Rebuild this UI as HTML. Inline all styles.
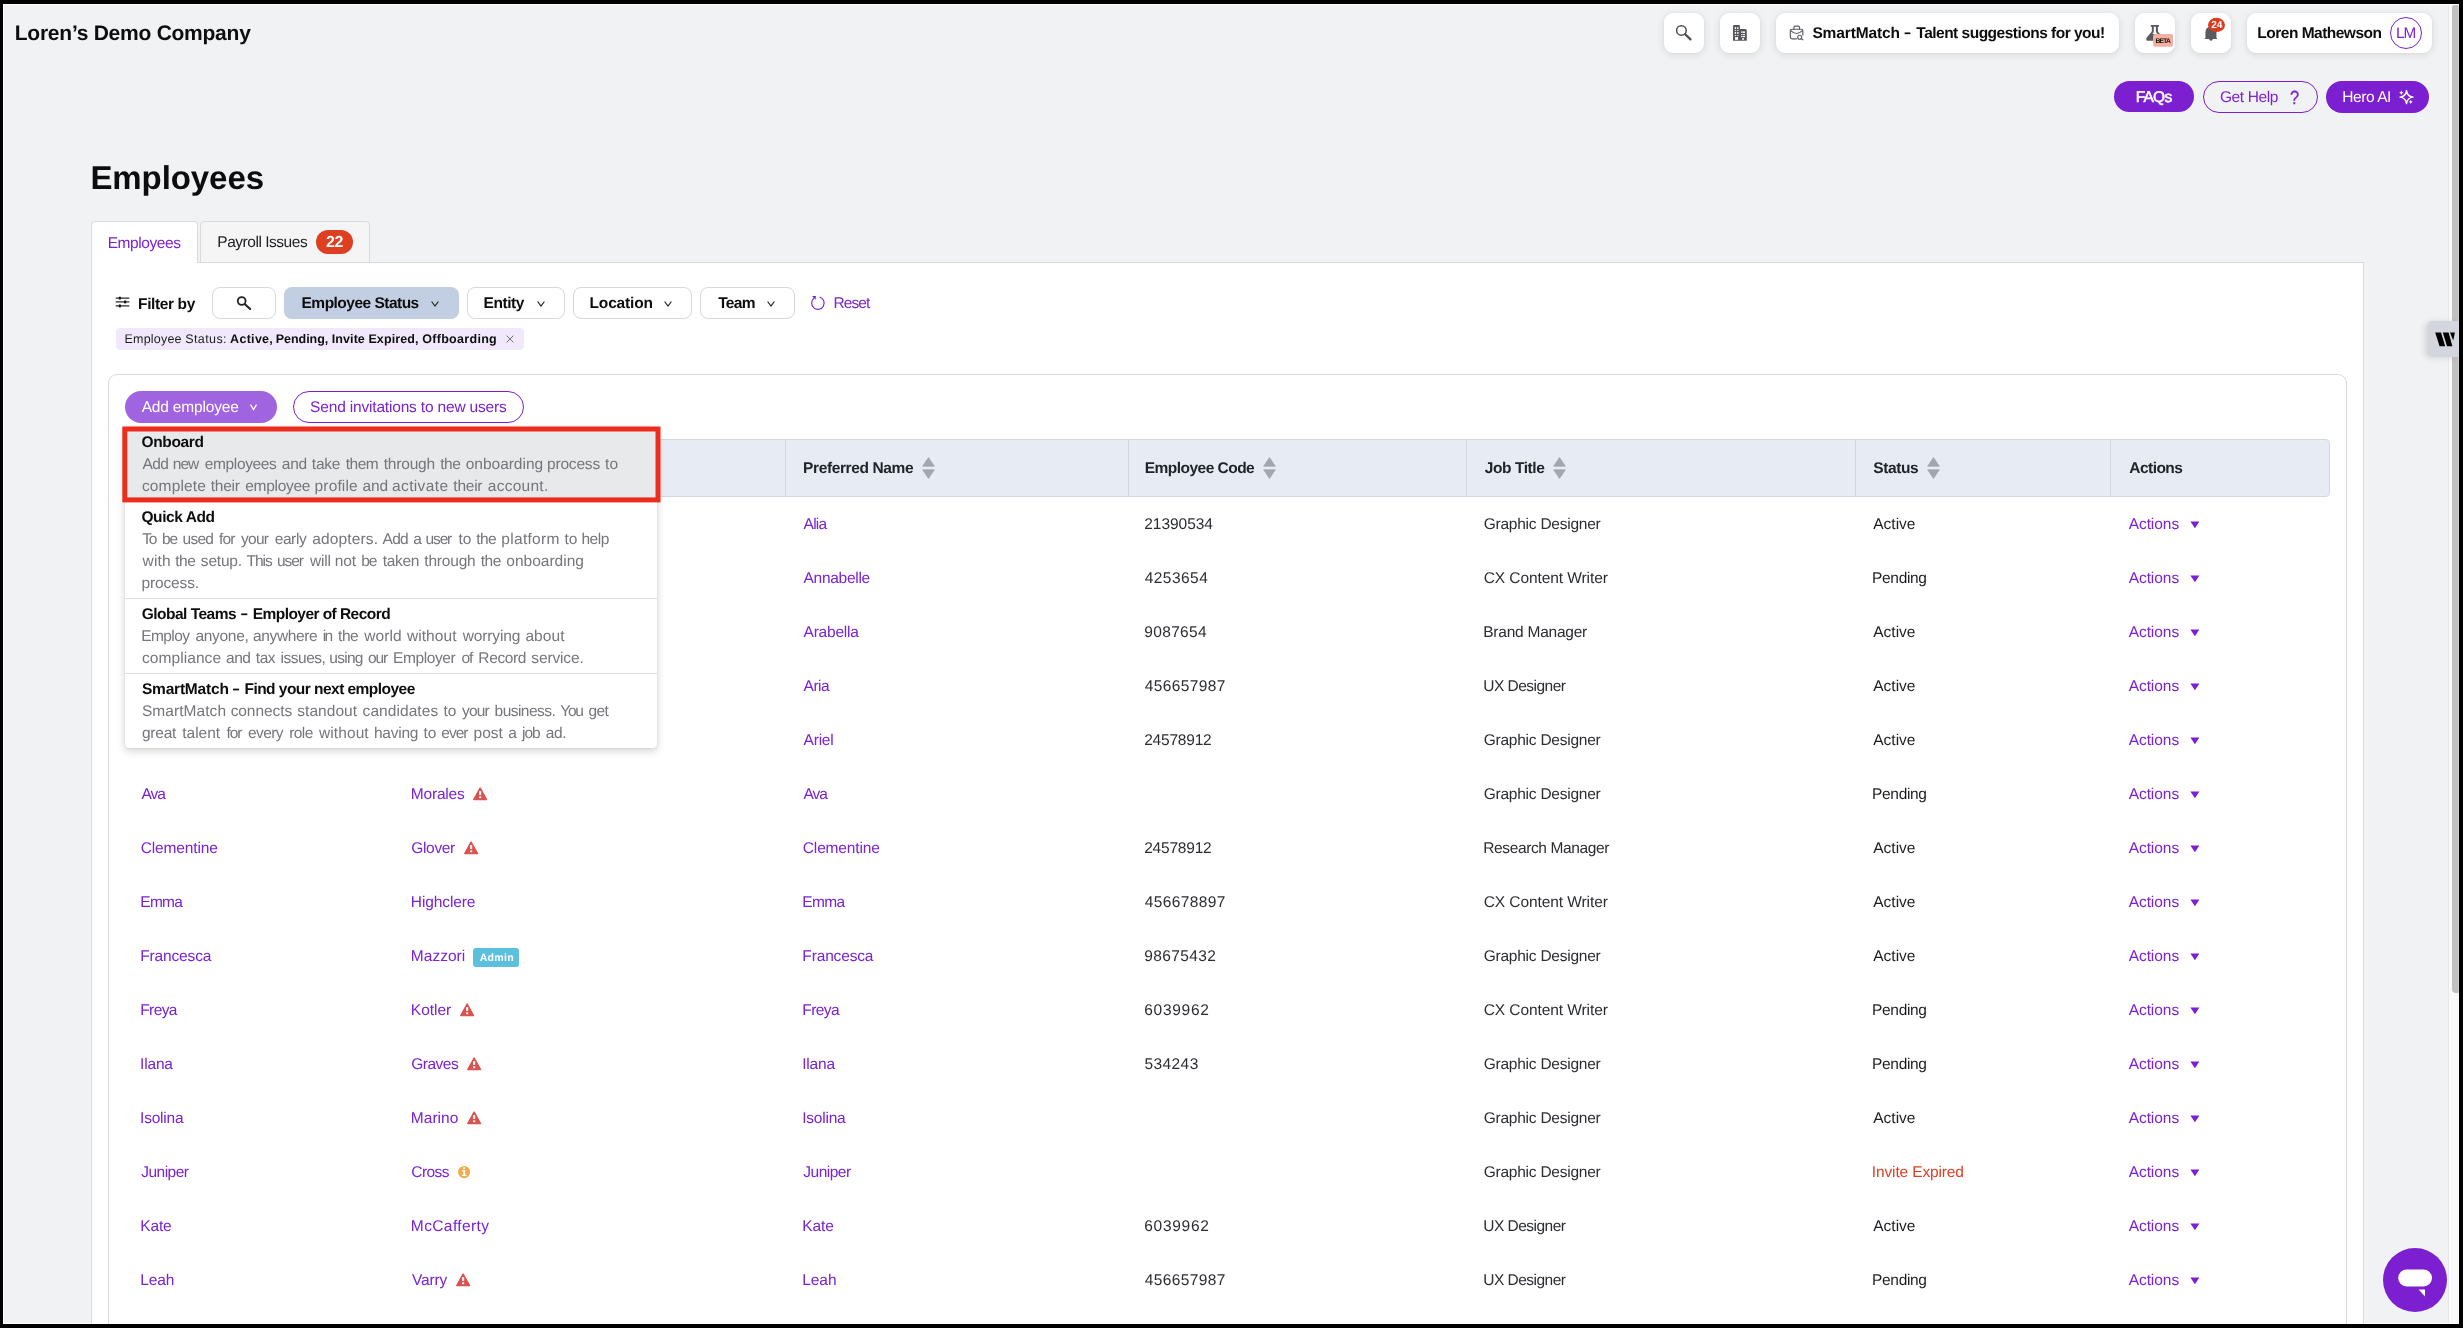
<!DOCTYPE html>
<html><head><meta charset="utf-8"><title>Employees</title>
<style>
html,body{margin:0;padding:0;}
body{width:2463px;height:1328px;background:#000;font-family:"Liberation Sans",sans-serif;position:relative;}
.b{position:absolute;box-sizing:border-box;}
.t{position:absolute;white-space:nowrap;font-family:"Liberation Sans",sans-serif;text-rendering:geometricPrecision;}
svg{display:block;overflow:visible;}
#page{position:absolute;left:0;top:0;width:2463px;height:1328px;overflow:hidden;will-change:transform;}
</style></head><body><div id="page">
<div class="b" style="left:3px;top:4px;width:2456px;height:1320px;background:#fff;"></div>
<div class="b" style="left:4px;top:5px;width:2455px;height:1318px;background:#f1f2f4;"></div>
<div class="t" style="left:14.80px;top:21px;font-size:21px;line-height:26px;font-weight:700;color:#0d0d0f;letter-spacing:-0.250px;">Loren’s Demo Company</div>
<div class="b" style="left:1664px;top:13px;width:40px;height:40px;background:#fff;border-radius:9px;box-shadow:0 2px 8px rgba(0,0,0,.10),0 0 3px rgba(0,0,0,.05);"></div>
<div class="b" style="left:1720px;top:13px;width:40px;height:40px;background:#fff;border-radius:9px;box-shadow:0 2px 8px rgba(0,0,0,.10),0 0 3px rgba(0,0,0,.05);"></div>
<div class="b" style="left:1776px;top:13px;width:343px;height:40px;background:#fff;border-radius:9px;box-shadow:0 2px 8px rgba(0,0,0,.10),0 0 3px rgba(0,0,0,.05);"></div>
<div class="b" style="left:2135px;top:13px;width:40px;height:40px;background:#fff;border-radius:9px;box-shadow:0 2px 8px rgba(0,0,0,.10),0 0 3px rgba(0,0,0,.05);"></div>
<div class="b" style="left:2191px;top:13px;width:40px;height:40px;background:#fff;border-radius:9px;box-shadow:0 2px 8px rgba(0,0,0,.10),0 0 3px rgba(0,0,0,.05);"></div>
<div class="b" style="left:2247px;top:13px;width:185px;height:40px;background:#fff;border-radius:9px;box-shadow:0 2px 8px rgba(0,0,0,.10),0 0 3px rgba(0,0,0,.05);"></div>
<svg class="b" style="left:1664px;top:13px;" width="40" height="40" viewBox="0 0 40 40"><circle cx="17.4" cy="17.45" r="4.8" fill="none" stroke="#4d4e54" stroke-width="1.5"/><path d="M21.2 21.2 L26.5 26.4" stroke="#4d4e54" stroke-width="2.3" stroke-linecap="round"/></svg>
<svg class="b" style="left:1720px;top:13px;" width="40" height="40" viewBox="0 0 40 40"><path d="M13 27.85 V13.4 a1.3 1.3 0 0 1 1.3 -1.3 H18.7 a1.3 1.3 0 0 1 1.3 1.3 V16.1 H25.2 a1.6 1.6 0 0 1 1.6 1.6 V27.85 Z" fill="#55565c"/>
<g fill="#fff"><rect x="14.75" y="14.15" width="1.35" height="1.85"/><rect x="17.2" y="14.15" width="1.35" height="1.85"/><rect x="14.75" y="17" width="1.35" height="0.9"/><rect x="17.2" y="17" width="1.35" height="0.9"/><rect x="14.75" y="19" width="1.35" height="1.8"/><rect x="17.2" y="19" width="1.35" height="1.8"/><rect x="14.75" y="22.1" width="1.35" height="0.9"/><rect x="17.2" y="22.1" width="1.35" height="0.9"/><rect x="15.05" y="24.1" width="3" height="2.7"/>
<rect x="21.1" y="18.4" width="3.9" height="1.5"/><rect x="21.1" y="21.1" width="3.9" height="1"/><rect x="21.1" y="23" width="3.9" height="1.1"/><rect x="22.1" y="25.15" width="1.8" height="1.65"/></g>
<g fill="#55565c"><rect x="21.9" y="18.4" width="0.5" height="6"/></g></svg>
<svg class="b" style="left:1788px;top:24px;" width="18" height="18" viewBox="0 0 18 18"><g fill="none" stroke="#5b5c62" stroke-width="1.15" stroke-linecap="round" stroke-linejoin="round"><path d="M6 5.2 V3.3 a1.2 1.2 0 0 1 1.2 -1.2 H10.3 a1.2 1.2 0 0 1 1.2 1.2 V5.2"/><path d="M14.8 10.9 V6.9 a1.7 1.7 0 0 0 -1.7 -1.7 H4 a1.7 1.7 0 0 0 -1.7 1.7 V13 a1.8 1.8 0 0 0 1.8 1.8 H8.5"/><path d="M2.7 6.7 Q8.5 12.3 14.4 6.7"/><circle cx="11.7" cy="13.2" r="2"/><path d="M13.2 14.6 L14.8 15.8"/></g></svg>
<div class="t" style="left:1812.40px;top:24px;font-size:15.5px;line-height:20px;font-weight:700;color:#0d0d0f;letter-spacing:-0.118px;">SmartMatch</div>
<svg class="b" style="left:0px;top:0px;" width="2463" height="1328" viewBox="0 0 2463 1328"><rect x="1904.6" y="32.45" width="5.80" height="1.7" fill="#0d0d0f"/></svg>
<div class="t" style="left:1916.33px;top:24px;font-size:15.5px;line-height:20px;font-weight:700;color:#0d0d0f;letter-spacing:-0.509px;">Talent suggestions for you!</div>
<svg class="b" style="left:2135px;top:13px;" width="40" height="40" viewBox="0 0 40 40"><path d="M15.8 12.05 H23.95 V13.7 H22.9 V18.1 Q22.9 19 23.6 19.6 L28.6 24.6 Q29.6 25.8 28.9 27 Q28.4 27.85 27.2 27.85 H13.2 Q11.9 27.85 11.4 26.9 Q10.9 25.8 11.7 24.6 L16.4 18.9 Q16.9 18.3 16.9 17.6 V13.7 H15.8 Z M18.8 13.7 V18 Q18.8 19.2 18 20.2 L17.3 21.1 H22.6 L21.6 19.9 Q20.9 19 20.9 18 V13.7 Z" fill="#595a60" fill-rule="evenodd"/>
<rect x="18.1" y="21.1" width="19.9" height="12.6" rx="1.8" fill="#f2b0a1"/></svg>
<div class="t" style="left:2155.55px;top:37px;font-size:6.7px;line-height:10px;font-weight:700;color:#1a0d0a;letter-spacing:-0.798px;">BETA</div>
<svg class="b" style="left:2191px;top:13px;" width="40" height="40" viewBox="0 0 40 40"><path d="M19.95 13.4 a5.5 5.5 0 0 1 5.5 5.5 V24.9 h0.45 v1 H13.85 v-1 h0.6 V18.9 a5.5 5.5 0 0 1 5.5 -5.5z M17.8 25.9 h4.2 l-1.3 1.7 q-0.8 0.5 -1.6 0z" fill="#5a5b61"/>
<ellipse cx="25.5" cy="11.9" rx="8.5" ry="7.1" fill="#de3b1e"/></svg>
<div class="t" style="left:2211.15px;top:20px;font-size:10px;line-height:12px;font-weight:700;color:#fff;letter-spacing:0.075px;">24</div>
<div class="t" style="left:2257.36px;top:24px;font-size:15.5px;line-height:20px;font-weight:700;color:#0d0d0f;letter-spacing:-0.512px;">Loren Mathewson</div>
<div class="b" style="left:2390px;top:17px;width:32px;height:32px;border:1px solid #7a22d4;border-radius:50%;"></div>
<div class="t" style="left:2395.94px;top:24px;font-size:15.3px;line-height:20px;color:#7a22d4;letter-spacing:-0.840px;">LM</div>
<div class="b" style="left:2114px;top:81px;width:80px;height:31px;background:#7b1fd1;border-radius:16px;"></div>
<div class="t" style="left:2135.73px;top:88px;font-size:15.5px;line-height:20px;color:#fff;letter-spacing:-0.778px;-webkit-text-stroke:0.55px #fff;">FAQs</div>
<div class="b" style="left:2203px;top:81px;width:115px;height:32px;border:1px solid #7b1fd1;border-radius:16px;"></div>
<div class="t" style="left:2219.92px;top:88px;font-size:15.5px;line-height:20px;color:#7a22d4;letter-spacing:-0.392px;">Get Help</div>
<div class="t" style="left:2290.02px;top:87px;font-size:19px;line-height:24px;color:#7a22d4;-webkit-text-stroke:0.3px #7a22d4;transform:scaleX(.86);transform-origin:0 0;">?</div>
<div class="b" style="left:2326px;top:81px;width:103px;height:32px;background:#7b1fd1;border-radius:16px;"></div>
<div class="t" style="left:2342.33px;top:88px;font-size:15.5px;line-height:20px;color:#fff;letter-spacing:-0.434px;">Hero AI</div>
<svg class="b" style="left:2398px;top:89px;" width="16" height="16" viewBox="0 0 16 16"><path d="M8.5 1.6 Q9.2 7.4 15 8.1 Q9.2 8.8 8.5 14.6 Q7.8 8.8 2 8.1 Q7.8 7.4 8.5 1.6 Z" fill="none" stroke="#fff" stroke-width="1.45" stroke-linejoin="round"/><g fill="#fff"><path d="M3.3 1.5 L4 3 L5.5 3.7 L4 4.4 L3.3 5.9 L2.6 4.4 L1.1 3.7 L2.6 3 Z"/><path d="M12.7 10.7 L13.4 12.2 L14.9 12.9 L13.4 13.6 L12.7 15.1 L12 13.6 L10.5 12.9 L12 12.2 Z"/></g></svg>
<div class="t" style="left:90.39px;top:158px;font-size:33px;line-height:40px;font-weight:700;color:#0d0d0f;letter-spacing:-0.074px;">Employees</div>
<div class="b" style="left:91px;top:262px;width:2273px;height:1062px;background:#fff;border:1px solid #d9dade;border-bottom:none;"></div>
<div class="b" style="left:200px;top:221px;width:170px;height:42px;background:#f5f5f6;border:1px solid #d9dade;border-radius:4px 4px 0 0;"></div>
<div class="b" style="left:91px;top:221px;width:107px;height:42px;background:#fff;border:1px solid #d9dade;border-bottom:none;border-radius:4px 4px 0 0;"></div>
<div class="t" style="left:107.63px;top:234px;font-size:15.5px;line-height:20px;color:#7a22d4;letter-spacing:-0.419px;">Employees</div>
<div class="t" style="left:217.33px;top:233px;font-size:15.5px;line-height:20px;color:#1d1e21;letter-spacing:-0.473px;">Payroll Issues</div>
<div class="b" style="left:316px;top:230px;width:37px;height:24px;background:#dd3f20;border-radius:12px;"></div>
<div class="t" style="left:325.95px;top:233px;font-size:16px;line-height:20px;font-weight:700;color:#fff;letter-spacing:-0.302px;">22</div>
<svg class="b" style="left:115px;top:295px;" width="16" height="14" viewBox="0 0 16 14"><g stroke="#2a2b2f" stroke-width="1.15" fill="none"><path d="M0.7 3.1 H14.3 M0.7 6.9 H14.3 M0.7 10.9 H14.3"/></g><g fill="#111"><ellipse cx="4.9" cy="3.1" rx="1.25" ry="1.7"/><ellipse cx="10.1" cy="6.9" rx="1.25" ry="1.7"/><ellipse cx="4.9" cy="10.9" rx="1.25" ry="1.7"/></g></svg>
<div class="t" style="left:138.06px;top:295px;font-size:15.5px;line-height:20px;font-weight:700;color:#0d0d0f;letter-spacing:-0.385px;">Filter by</div>
<div class="b" style="left:212px;top:287px;width:64px;height:32px;background:#fff;border:1px solid #d6d8dd;border-radius:8px;"></div>
<svg class="b" style="left:212px;top:287px;" width="64" height="32" viewBox="0 0 64 32"><circle cx="29.7" cy="14" r="3.9" fill="none" stroke="#222" stroke-width="1.8"/><path d="M32.9 17.2 L38.2 22" stroke="#222" stroke-width="2.1" stroke-linecap="round"/></svg>
<div class="b" style="left:284px;top:287px;width:175px;height:32px;background:#c2cee1;border-radius:8px;"></div>
<div class="t" style="left:301.56px;top:294px;font-size:15.5px;line-height:20px;font-weight:700;color:#0d0d0f;letter-spacing:-0.517px;">Employee Status</div>
<svg class="b" style="left:430.6px;top:300.6px;" width="8" height="6" viewBox="0 0 8 6"><path d="M0.6 0.5 L4 5 L7.4 0.5" fill="none" stroke="#222" stroke-width="1.2"/></svg>
<div class="b" style="left:467px;top:287px;width:98px;height:32px;background:#fff;border:1px solid #d6d8dd;border-radius:8px;"></div>
<div class="t" style="left:483.56px;top:294px;font-size:15.5px;line-height:20px;font-weight:700;color:#0d0d0f;letter-spacing:-0.448px;">Entity</div>
<svg class="b" style="left:536.6px;top:300.6px;" width="8" height="6" viewBox="0 0 8 6"><path d="M0.6 0.5 L4 5 L7.4 0.5" fill="none" stroke="#222" stroke-width="1.2"/></svg>
<div class="b" style="left:573px;top:287px;width:119px;height:32px;background:#fff;border:1px solid #d6d8dd;border-radius:8px;"></div>
<div class="t" style="left:589.56px;top:294px;font-size:15.5px;line-height:20px;font-weight:700;color:#0d0d0f;letter-spacing:-0.171px;">Location</div>
<svg class="b" style="left:663.6px;top:300.6px;" width="8" height="6" viewBox="0 0 8 6"><path d="M0.6 0.5 L4 5 L7.4 0.5" fill="none" stroke="#222" stroke-width="1.2"/></svg>
<div class="b" style="left:700px;top:287px;width:95px;height:32px;background:#fff;border:1px solid #d6d8dd;border-radius:8px;"></div>
<div class="t" style="left:718.13px;top:294px;font-size:15.5px;line-height:20px;font-weight:700;color:#0d0d0f;letter-spacing:-0.636px;">Team</div>
<svg class="b" style="left:766.6px;top:300.6px;" width="8" height="6" viewBox="0 0 8 6"><path d="M0.6 0.5 L4 5 L7.4 0.5" fill="none" stroke="#222" stroke-width="1.2"/></svg>
<svg class="b" style="left:809px;top:294px;" width="18" height="18" viewBox="0 0 18 18"><path d="M10.52 3.06 A6.25 6.25 0 1 1 5.05 4.17" fill="none" stroke="#7a22d4" stroke-width="1.15"/><path d="M3 2.1 L6.9 1.95 L6.6 5.7 Z" fill="#7a22d4"/></svg>
<div class="t" style="left:833.53px;top:294px;font-size:15.5px;line-height:20px;color:#7a22d4;letter-spacing:-0.929px;">Reset</div>
<div class="b" style="left:116px;top:328px;width:408px;height:22px;background:#f1e9fb;border-radius:4px;"></div>
<div class="t" style="left:124.53px;top:331px;font-size:12.5px;line-height:16px;color:#1d1e21;letter-spacing:0.198px;">Employee</div>
<div class="t" style="left:185.25px;top:331px;font-size:12.5px;line-height:16px;color:#1d1e21;letter-spacing:0.395px;">Status:</div>
<div class="t" style="left:230.12px;top:331px;font-size:12.5px;line-height:16px;font-weight:700;color:#0d0d0f;letter-spacing:0.288px;">Active,</div>
<div class="t" style="left:275.71px;top:331px;font-size:12.5px;line-height:16px;font-weight:700;color:#0d0d0f;letter-spacing:-0.029px;">Pending,</div>
<div class="t" style="left:331.81px;top:331px;font-size:12.5px;line-height:16px;font-weight:700;color:#0d0d0f;letter-spacing:0.074px;">Invite</div>
<div class="t" style="left:368.43px;top:331px;font-size:12.5px;line-height:16px;font-weight:700;color:#0d0d0f;letter-spacing:0.108px;">Expired,</div>
<div class="t" style="left:422.20px;top:331px;font-size:12.5px;line-height:16px;font-weight:700;color:#0d0d0f;letter-spacing:0.305px;">Offboarding</div>
<svg class="b" style="left:506px;top:335px;" width="8" height="8" viewBox="0 0 8 8"><path d="M0.6 0.6 L7.4 7.4 M7.4 0.6 L0.6 7.4" stroke="#666" stroke-width="0.9"/></svg>
<div class="b" style="left:108px;top:374px;width:2239px;height:966px;background:#fff;border:1px solid #d9dade;border-radius:9px;"></div>
<div class="b" style="left:125px;top:391px;width:152px;height:32px;background:#a164e0;border-radius:16px;"></div>
<div class="t" style="left:141.67px;top:398px;font-size:15.5px;line-height:20px;color:#fff;letter-spacing:-0.170px;">Add employee</div>
<svg class="b" style="left:250.2px;top:404.2px;" width="7" height="7" viewBox="0 0 7 7"><path d="M0.5 0.6 L3.5 5.6 L6.5 0.6" fill="none" stroke="#fff" stroke-width="1.3"/></svg>
<div class="b" style="left:293px;top:391px;width:231px;height:32px;background:#fff;border:1px solid #7b1fd1;border-radius:16px;"></div>
<div class="t" style="left:310.10px;top:398px;font-size:15.5px;line-height:20px;color:#7a22d4;letter-spacing:-0.177px;">Send invitations to new users</div>
<div class="b" style="left:125px;top:439px;width:2205px;height:58px;background:#e7ebf3;border:1px solid #d4d7dd;border-radius:4px;"></div>
<div class="b" style="left:395px;top:440px;width:1px;height:56px;background:#d4d7dd;"></div>
<div class="b" style="left:785px;top:440px;width:1px;height:56px;background:#d4d7dd;"></div>
<div class="b" style="left:1128px;top:440px;width:1px;height:56px;background:#d4d7dd;"></div>
<div class="b" style="left:1466px;top:440px;width:1px;height:56px;background:#d4d7dd;"></div>
<div class="b" style="left:1855px;top:440px;width:1px;height:56px;background:#d4d7dd;"></div>
<div class="b" style="left:2110px;top:440px;width:1px;height:56px;background:#d4d7dd;"></div>
<div class="t" style="left:803.06px;top:459px;font-size:15.5px;line-height:20px;font-weight:700;color:#20242a;letter-spacing:-0.376px;">Preferred Name</div>
<svg class="b" style="left:922px;top:457px;" width="13" height="22" viewBox="0 0 13 22"><path d="M6.5 0.6 L12.3 9.2 H0.7 Z M6.5 21.4 L12.3 12.8 H0.7 Z" fill="#a2a6af" stroke="#a2a6af" stroke-width="0.8" stroke-linejoin="round"/></svg>
<div class="t" style="left:1144.66px;top:459px;font-size:15.5px;line-height:20px;font-weight:700;color:#20242a;letter-spacing:-0.518px;">Employee Code</div>
<svg class="b" style="left:1263px;top:457px;" width="13" height="22" viewBox="0 0 13 22"><path d="M6.5 0.6 L12.3 9.2 H0.7 Z M6.5 21.4 L12.3 12.8 H0.7 Z" fill="#a2a6af" stroke="#a2a6af" stroke-width="0.8" stroke-linejoin="round"/></svg>
<div class="t" style="left:1484.87px;top:459px;font-size:15.5px;line-height:20px;font-weight:700;color:#20242a;letter-spacing:-0.436px;">Job Title</div>
<svg class="b" style="left:1553px;top:457px;" width="13" height="22" viewBox="0 0 13 22"><path d="M6.5 0.6 L12.3 9.2 H0.7 Z M6.5 21.4 L12.3 12.8 H0.7 Z" fill="#a2a6af" stroke="#a2a6af" stroke-width="0.8" stroke-linejoin="round"/></svg>
<div class="t" style="left:1873.25px;top:459px;font-size:15.5px;line-height:20px;font-weight:700;color:#20242a;letter-spacing:-0.379px;">Status</div>
<svg class="b" style="left:1927px;top:457px;" width="13" height="22" viewBox="0 0 13 22"><path d="M6.5 0.6 L12.3 9.2 H0.7 Z M6.5 21.4 L12.3 12.8 H0.7 Z" fill="#a2a6af" stroke="#a2a6af" stroke-width="0.8" stroke-linejoin="round"/></svg>
<div class="t" style="left:2129.31px;top:459px;font-size:15.5px;line-height:20px;font-weight:700;color:#20242a;letter-spacing:-0.537px;">Actions</div>
<div class="t" style="left:803.57px;top:515px;font-size:15.5px;line-height:20px;color:#7a22d4;letter-spacing:-0.743px;">Alia</div>
<div class="t" style="left:1144.22px;top:515px;font-size:15.5px;line-height:20px;color:#2b2d31;letter-spacing:-0.034px;">21390534</div>
<div class="t" style="left:1483.72px;top:515px;font-size:15.5px;line-height:20px;color:#2b2d31;letter-spacing:-0.238px;">Graphic Designer</div>
<div class="t" style="left:1873.27px;top:515px;font-size:15.5px;line-height:20px;color:#1d1e21;letter-spacing:0.000px;">Active</div>
<div class="t" style="left:2128.67px;top:515px;font-size:15.5px;line-height:20px;color:#7a22d4;letter-spacing:-0.059px;">Actions</div>
<svg class="b" style="left:2189.6px;top:520.8px;" width="10" height="8" viewBox="0 0 10 8"><path d="M0.4 0.6 H9.4 L4.9 7.2 Z" fill="#7b1fd1"/></svg>
<div class="t" style="left:803.57px;top:569px;font-size:15.5px;line-height:20px;color:#7a22d4;letter-spacing:-0.292px;">Annabelle</div>
<div class="t" style="left:1144.64px;top:569px;font-size:15.5px;line-height:20px;color:#2b2d31;letter-spacing:0.478px;">4253654</div>
<div class="t" style="left:1483.71px;top:569px;font-size:15.5px;line-height:20px;color:#2b2d31;letter-spacing:-0.084px;">CX Content Writer</div>
<div class="t" style="left:1872.03px;top:569px;font-size:15.5px;line-height:20px;color:#1d1e21;letter-spacing:-0.320px;">Pending</div>
<div class="t" style="left:2128.67px;top:569px;font-size:15.5px;line-height:20px;color:#7a22d4;letter-spacing:-0.059px;">Actions</div>
<svg class="b" style="left:2189.6px;top:574.8px;" width="10" height="8" viewBox="0 0 10 8"><path d="M0.4 0.6 H9.4 L4.9 7.2 Z" fill="#7b1fd1"/></svg>
<div class="t" style="left:803.57px;top:623px;font-size:15.5px;line-height:20px;color:#7a22d4;letter-spacing:-0.221px;">Arabella</div>
<div class="t" style="left:1144.27px;top:623px;font-size:15.5px;line-height:20px;color:#2b2d31;letter-spacing:0.339px;">9087654</div>
<div class="t" style="left:1483.23px;top:623px;font-size:15.5px;line-height:20px;color:#2b2d31;letter-spacing:-0.235px;">Brand Manager</div>
<div class="t" style="left:1873.27px;top:623px;font-size:15.5px;line-height:20px;color:#1d1e21;letter-spacing:0.000px;">Active</div>
<div class="t" style="left:2128.67px;top:623px;font-size:15.5px;line-height:20px;color:#7a22d4;letter-spacing:-0.059px;">Actions</div>
<svg class="b" style="left:2189.6px;top:628.8px;" width="10" height="8" viewBox="0 0 10 8"><path d="M0.4 0.6 H9.4 L4.9 7.2 Z" fill="#7b1fd1"/></svg>
<div class="t" style="left:803.57px;top:677px;font-size:15.5px;line-height:20px;color:#7a22d4;letter-spacing:-0.516px;">Aria</div>
<div class="t" style="left:1144.64px;top:677px;font-size:15.5px;line-height:20px;color:#2b2d31;letter-spacing:0.405px;">456657987</div>
<div class="t" style="left:1483.30px;top:677px;font-size:15.5px;line-height:20px;color:#2b2d31;letter-spacing:-0.522px;">UX Designer</div>
<div class="t" style="left:1873.27px;top:677px;font-size:15.5px;line-height:20px;color:#1d1e21;letter-spacing:0.000px;">Active</div>
<div class="t" style="left:2128.67px;top:677px;font-size:15.5px;line-height:20px;color:#7a22d4;letter-spacing:-0.059px;">Actions</div>
<svg class="b" style="left:2189.6px;top:682.8px;" width="10" height="8" viewBox="0 0 10 8"><path d="M0.4 0.6 H9.4 L4.9 7.2 Z" fill="#7b1fd1"/></svg>
<div class="t" style="left:803.57px;top:731px;font-size:15.5px;line-height:20px;color:#7a22d4;letter-spacing:-0.212px;">Ariel</div>
<div class="t" style="left:1144.22px;top:731px;font-size:15.5px;line-height:20px;color:#2b2d31;letter-spacing:-0.216px;">24578912</div>
<div class="t" style="left:1483.72px;top:731px;font-size:15.5px;line-height:20px;color:#2b2d31;letter-spacing:-0.238px;">Graphic Designer</div>
<div class="t" style="left:1873.27px;top:731px;font-size:15.5px;line-height:20px;color:#1d1e21;letter-spacing:0.000px;">Active</div>
<div class="t" style="left:2128.67px;top:731px;font-size:15.5px;line-height:20px;color:#7a22d4;letter-spacing:-0.059px;">Actions</div>
<svg class="b" style="left:2189.6px;top:736.8px;" width="10" height="8" viewBox="0 0 10 8"><path d="M0.4 0.6 H9.4 L4.9 7.2 Z" fill="#7b1fd1"/></svg>
<div class="t" style="left:141.47px;top:785px;font-size:15.5px;line-height:20px;color:#7a22d4;letter-spacing:-1.004px;">Ava</div>
<div class="t" style="left:410.83px;top:785px;font-size:15.5px;line-height:20px;color:#7a22d4;letter-spacing:-0.202px;">Morales</div>
<svg class="b" style="left:473.0px;top:786.6px;" width="14.3" height="13.4" viewBox="0 0 14.3 13.4"><path d="M7.15 1.1 L13.5 12.5 H0.8 Z" fill="#d9534f" stroke="#d9534f" stroke-width="1.5" stroke-linejoin="round"/><rect x="6.15" y="4.15" width="2.05" height="3.8" fill="#fff"/><rect x="6.15" y="9.35" width="2.05" height="1.85" fill="#fff"/></svg>
<div class="t" style="left:803.57px;top:785px;font-size:15.5px;line-height:20px;color:#7a22d4;letter-spacing:-1.004px;">Ava</div>
<div class="t" style="left:1483.72px;top:785px;font-size:15.5px;line-height:20px;color:#2b2d31;letter-spacing:-0.238px;">Graphic Designer</div>
<div class="t" style="left:1872.03px;top:785px;font-size:15.5px;line-height:20px;color:#1d1e21;letter-spacing:-0.320px;">Pending</div>
<div class="t" style="left:2128.67px;top:785px;font-size:15.5px;line-height:20px;color:#7a22d4;letter-spacing:-0.059px;">Actions</div>
<svg class="b" style="left:2189.6px;top:790.8px;" width="10" height="8" viewBox="0 0 10 8"><path d="M0.4 0.6 H9.4 L4.9 7.2 Z" fill="#7b1fd1"/></svg>
<div class="t" style="left:140.71px;top:839px;font-size:15.5px;line-height:20px;color:#7a22d4;letter-spacing:-0.148px;">Clementine</div>
<div class="t" style="left:411.32px;top:839px;font-size:15.5px;line-height:20px;color:#7a22d4;letter-spacing:-0.344px;">Glover</div>
<svg class="b" style="left:463.8px;top:840.6px;" width="14.3" height="13.4" viewBox="0 0 14.3 13.4"><path d="M7.15 1.1 L13.5 12.5 H0.8 Z" fill="#d9534f" stroke="#d9534f" stroke-width="1.5" stroke-linejoin="round"/><rect x="6.15" y="4.15" width="2.05" height="3.8" fill="#fff"/><rect x="6.15" y="9.35" width="2.05" height="1.85" fill="#fff"/></svg>
<div class="t" style="left:802.81px;top:839px;font-size:15.5px;line-height:20px;color:#7a22d4;letter-spacing:-0.148px;">Clementine</div>
<div class="t" style="left:1144.22px;top:839px;font-size:15.5px;line-height:20px;color:#2b2d31;letter-spacing:-0.216px;">24578912</div>
<div class="t" style="left:1483.23px;top:839px;font-size:15.5px;line-height:20px;color:#2b2d31;letter-spacing:-0.367px;">Research Manager</div>
<div class="t" style="left:1873.27px;top:839px;font-size:15.5px;line-height:20px;color:#1d1e21;letter-spacing:0.000px;">Active</div>
<div class="t" style="left:2128.67px;top:839px;font-size:15.5px;line-height:20px;color:#7a22d4;letter-spacing:-0.059px;">Actions</div>
<svg class="b" style="left:2189.6px;top:844.8px;" width="10" height="8" viewBox="0 0 10 8"><path d="M0.4 0.6 H9.4 L4.9 7.2 Z" fill="#7b1fd1"/></svg>
<div class="t" style="left:140.23px;top:893px;font-size:15.5px;line-height:20px;color:#7a22d4;letter-spacing:-0.675px;">Emma</div>
<div class="t" style="left:410.83px;top:893px;font-size:15.5px;line-height:20px;color:#7a22d4;letter-spacing:-0.103px;">Highclere</div>
<div class="t" style="left:802.33px;top:893px;font-size:15.5px;line-height:20px;color:#7a22d4;letter-spacing:-0.675px;">Emma</div>
<div class="t" style="left:1144.64px;top:893px;font-size:15.5px;line-height:20px;color:#2b2d31;letter-spacing:0.380px;">456678897</div>
<div class="t" style="left:1483.71px;top:893px;font-size:15.5px;line-height:20px;color:#2b2d31;letter-spacing:-0.084px;">CX Content Writer</div>
<div class="t" style="left:1873.27px;top:893px;font-size:15.5px;line-height:20px;color:#1d1e21;letter-spacing:0.000px;">Active</div>
<div class="t" style="left:2128.67px;top:893px;font-size:15.5px;line-height:20px;color:#7a22d4;letter-spacing:-0.059px;">Actions</div>
<svg class="b" style="left:2189.6px;top:898.8px;" width="10" height="8" viewBox="0 0 10 8"><path d="M0.4 0.6 H9.4 L4.9 7.2 Z" fill="#7b1fd1"/></svg>
<div class="t" style="left:140.23px;top:947px;font-size:15.5px;line-height:20px;color:#7a22d4;letter-spacing:-0.150px;">Francesca</div>
<div class="t" style="left:410.83px;top:947px;font-size:15.5px;line-height:20px;color:#7a22d4;letter-spacing:0.025px;">Mazzori</div>
<div class="b" style="left:473px;top:948px;width:46px;height:19px;background:#5bc0de;border-radius:3px;"></div>
<div class="t" style="left:479.74px;top:952px;font-size:10.6px;line-height:12px;font-weight:700;color:#fff;letter-spacing:0.238px;">Admin</div>
<div class="t" style="left:802.33px;top:947px;font-size:15.5px;line-height:20px;color:#7a22d4;letter-spacing:-0.150px;">Francesca</div>
<div class="t" style="left:1144.27px;top:947px;font-size:15.5px;line-height:20px;color:#2b2d31;letter-spacing:0.391px;">98675432</div>
<div class="t" style="left:1483.72px;top:947px;font-size:15.5px;line-height:20px;color:#2b2d31;letter-spacing:-0.238px;">Graphic Designer</div>
<div class="t" style="left:1873.27px;top:947px;font-size:15.5px;line-height:20px;color:#1d1e21;letter-spacing:0.000px;">Active</div>
<div class="t" style="left:2128.67px;top:947px;font-size:15.5px;line-height:20px;color:#7a22d4;letter-spacing:-0.059px;">Actions</div>
<svg class="b" style="left:2189.6px;top:952.8px;" width="10" height="8" viewBox="0 0 10 8"><path d="M0.4 0.6 H9.4 L4.9 7.2 Z" fill="#7b1fd1"/></svg>
<div class="t" style="left:140.23px;top:1001px;font-size:15.5px;line-height:20px;color:#7a22d4;letter-spacing:-0.588px;">Freya</div>
<div class="t" style="left:410.83px;top:1001px;font-size:15.5px;line-height:20px;color:#7a22d4;letter-spacing:-0.014px;">Kotler</div>
<svg class="b" style="left:459.8px;top:1002.6px;" width="14.3" height="13.4" viewBox="0 0 14.3 13.4"><path d="M7.15 1.1 L13.5 12.5 H0.8 Z" fill="#d9534f" stroke="#d9534f" stroke-width="1.5" stroke-linejoin="round"/><rect x="6.15" y="4.15" width="2.05" height="3.8" fill="#fff"/><rect x="6.15" y="9.35" width="2.05" height="1.85" fill="#fff"/></svg>
<div class="t" style="left:802.33px;top:1001px;font-size:15.5px;line-height:20px;color:#7a22d4;letter-spacing:-0.588px;">Freya</div>
<div class="t" style="left:1144.21px;top:1001px;font-size:15.5px;line-height:20px;color:#2b2d31;letter-spacing:0.720px;">6039962</div>
<div class="t" style="left:1483.71px;top:1001px;font-size:15.5px;line-height:20px;color:#2b2d31;letter-spacing:-0.084px;">CX Content Writer</div>
<div class="t" style="left:1872.03px;top:1001px;font-size:15.5px;line-height:20px;color:#1d1e21;letter-spacing:-0.320px;">Pending</div>
<div class="t" style="left:2128.67px;top:1001px;font-size:15.5px;line-height:20px;color:#7a22d4;letter-spacing:-0.059px;">Actions</div>
<svg class="b" style="left:2189.6px;top:1006.8px;" width="10" height="8" viewBox="0 0 10 8"><path d="M0.4 0.6 H9.4 L4.9 7.2 Z" fill="#7b1fd1"/></svg>
<div class="t" style="left:140.07px;top:1055px;font-size:15.5px;line-height:20px;color:#7a22d4;letter-spacing:-0.174px;">Ilana</div>
<div class="t" style="left:411.32px;top:1055px;font-size:15.5px;line-height:20px;color:#7a22d4;letter-spacing:-0.526px;">Graves</div>
<svg class="b" style="left:466.9px;top:1056.6px;" width="14.3" height="13.4" viewBox="0 0 14.3 13.4"><path d="M7.15 1.1 L13.5 12.5 H0.8 Z" fill="#d9534f" stroke="#d9534f" stroke-width="1.5" stroke-linejoin="round"/><rect x="6.15" y="4.15" width="2.05" height="3.8" fill="#fff"/><rect x="6.15" y="9.35" width="2.05" height="1.85" fill="#fff"/></svg>
<div class="t" style="left:802.17px;top:1055px;font-size:15.5px;line-height:20px;color:#7a22d4;letter-spacing:-0.174px;">Ilana</div>
<div class="t" style="left:1144.38px;top:1055px;font-size:15.5px;line-height:20px;color:#2b2d31;letter-spacing:0.433px;">534243</div>
<div class="t" style="left:1483.72px;top:1055px;font-size:15.5px;line-height:20px;color:#2b2d31;letter-spacing:-0.238px;">Graphic Designer</div>
<div class="t" style="left:1872.03px;top:1055px;font-size:15.5px;line-height:20px;color:#1d1e21;letter-spacing:-0.320px;">Pending</div>
<div class="t" style="left:2128.67px;top:1055px;font-size:15.5px;line-height:20px;color:#7a22d4;letter-spacing:-0.059px;">Actions</div>
<svg class="b" style="left:2189.6px;top:1060.8px;" width="10" height="8" viewBox="0 0 10 8"><path d="M0.4 0.6 H9.4 L4.9 7.2 Z" fill="#7b1fd1"/></svg>
<div class="t" style="left:140.07px;top:1109px;font-size:15.5px;line-height:20px;color:#7a22d4;letter-spacing:-0.214px;">Isolina</div>
<div class="t" style="left:410.83px;top:1109px;font-size:15.5px;line-height:20px;color:#7a22d4;letter-spacing:0.026px;">Marino</div>
<svg class="b" style="left:466.5px;top:1110.6px;" width="14.3" height="13.4" viewBox="0 0 14.3 13.4"><path d="M7.15 1.1 L13.5 12.5 H0.8 Z" fill="#d9534f" stroke="#d9534f" stroke-width="1.5" stroke-linejoin="round"/><rect x="6.15" y="4.15" width="2.05" height="3.8" fill="#fff"/><rect x="6.15" y="9.35" width="2.05" height="1.85" fill="#fff"/></svg>
<div class="t" style="left:802.17px;top:1109px;font-size:15.5px;line-height:20px;color:#7a22d4;letter-spacing:-0.214px;">Isolina</div>
<div class="t" style="left:1483.72px;top:1109px;font-size:15.5px;line-height:20px;color:#2b2d31;letter-spacing:-0.238px;">Graphic Designer</div>
<div class="t" style="left:1873.27px;top:1109px;font-size:15.5px;line-height:20px;color:#1d1e21;letter-spacing:0.000px;">Active</div>
<div class="t" style="left:2128.67px;top:1109px;font-size:15.5px;line-height:20px;color:#7a22d4;letter-spacing:-0.059px;">Actions</div>
<svg class="b" style="left:2189.6px;top:1114.8px;" width="10" height="8" viewBox="0 0 10 8"><path d="M0.4 0.6 H9.4 L4.9 7.2 Z" fill="#7b1fd1"/></svg>
<div class="t" style="left:141.26px;top:1163px;font-size:15.5px;line-height:20px;color:#7a22d4;letter-spacing:-0.524px;">Juniper</div>
<div class="t" style="left:411.31px;top:1163px;font-size:15.5px;line-height:20px;color:#7a22d4;letter-spacing:-0.584px;">Cross</div>
<svg class="b" style="left:457.5px;top:1165.9px;" width="12.2" height="12.2" viewBox="0 0 12.2 12.2"><circle cx="6.1" cy="6.1" r="6.1" fill="#f0ad4e"/><rect x="5.2" y="1.35" width="1.75" height="1.65" rx="0.4" fill="#fff"/><path d="M4.25 3.9 h2.9 v4.9 h1.2 v1.3 h-4.2 v-1.3 h1.2 v-3.55 h-1.1z" fill="#fff"/></svg>
<div class="t" style="left:803.36px;top:1163px;font-size:15.5px;line-height:20px;color:#7a22d4;letter-spacing:-0.524px;">Juniper</div>
<div class="t" style="left:1483.72px;top:1163px;font-size:15.5px;line-height:20px;color:#2b2d31;letter-spacing:-0.238px;">Graphic Designer</div>
<div class="t" style="left:1871.87px;top:1163px;font-size:15.5px;line-height:20px;color:#de3f23;letter-spacing:-0.146px;">Invite Expired</div>
<div class="t" style="left:2128.67px;top:1163px;font-size:15.5px;line-height:20px;color:#7a22d4;letter-spacing:-0.059px;">Actions</div>
<svg class="b" style="left:2189.6px;top:1168.8px;" width="10" height="8" viewBox="0 0 10 8"><path d="M0.4 0.6 H9.4 L4.9 7.2 Z" fill="#7b1fd1"/></svg>
<div class="t" style="left:140.23px;top:1217px;font-size:15.5px;line-height:20px;color:#7a22d4;letter-spacing:-0.143px;">Kate</div>
<div class="t" style="left:410.83px;top:1217px;font-size:15.5px;line-height:20px;color:#7a22d4;letter-spacing:0.394px;">McCafferty</div>
<div class="t" style="left:802.33px;top:1217px;font-size:15.5px;line-height:20px;color:#7a22d4;letter-spacing:-0.143px;">Kate</div>
<div class="t" style="left:1144.21px;top:1217px;font-size:15.5px;line-height:20px;color:#2b2d31;letter-spacing:0.720px;">6039962</div>
<div class="t" style="left:1483.30px;top:1217px;font-size:15.5px;line-height:20px;color:#2b2d31;letter-spacing:-0.522px;">UX Designer</div>
<div class="t" style="left:1873.27px;top:1217px;font-size:15.5px;line-height:20px;color:#1d1e21;letter-spacing:0.000px;">Active</div>
<div class="t" style="left:2128.67px;top:1217px;font-size:15.5px;line-height:20px;color:#7a22d4;letter-spacing:-0.059px;">Actions</div>
<svg class="b" style="left:2189.6px;top:1222.8px;" width="10" height="8" viewBox="0 0 10 8"><path d="M0.4 0.6 H9.4 L4.9 7.2 Z" fill="#7b1fd1"/></svg>
<div class="t" style="left:140.23px;top:1271px;font-size:15.5px;line-height:20px;color:#7a22d4;letter-spacing:-0.102px;">Leah</div>
<div class="t" style="left:412.03px;top:1271px;font-size:15.5px;line-height:20px;color:#7a22d4;letter-spacing:-0.148px;">Varry</div>
<svg class="b" style="left:456.1px;top:1272.6px;" width="14.3" height="13.4" viewBox="0 0 14.3 13.4"><path d="M7.15 1.1 L13.5 12.5 H0.8 Z" fill="#d9534f" stroke="#d9534f" stroke-width="1.5" stroke-linejoin="round"/><rect x="6.15" y="4.15" width="2.05" height="3.8" fill="#fff"/><rect x="6.15" y="9.35" width="2.05" height="1.85" fill="#fff"/></svg>
<div class="t" style="left:802.33px;top:1271px;font-size:15.5px;line-height:20px;color:#7a22d4;letter-spacing:-0.102px;">Leah</div>
<div class="t" style="left:1144.64px;top:1271px;font-size:15.5px;line-height:20px;color:#2b2d31;letter-spacing:0.405px;">456657987</div>
<div class="t" style="left:1483.30px;top:1271px;font-size:15.5px;line-height:20px;color:#2b2d31;letter-spacing:-0.522px;">UX Designer</div>
<div class="t" style="left:1872.03px;top:1271px;font-size:15.5px;line-height:20px;color:#1d1e21;letter-spacing:-0.320px;">Pending</div>
<div class="t" style="left:2128.67px;top:1271px;font-size:15.5px;line-height:20px;color:#7a22d4;letter-spacing:-0.059px;">Actions</div>
<svg class="b" style="left:2189.6px;top:1276.8px;" width="10" height="8" viewBox="0 0 10 8"><path d="M0.4 0.6 H9.4 L4.9 7.2 Z" fill="#7b1fd1"/></svg>
<div class="b" style="left:125px;top:427px;width:532px;height:321px;background:#fff;border-radius:0 0 4px 4px;box-shadow:0 3px 8px rgba(0,0,0,.18),0 0 2px rgba(0,0,0,.10);"></div>
<div class="b" style="left:125px;top:427px;width:532px;height:75px;background:#e8e9eb;"></div>
<div class="b" style="left:125px;top:598px;width:532px;height:1px;background:#dcdde0;"></div>
<div class="b" style="left:125px;top:673px;width:532px;height:1px;background:#dcdde0;"></div>
<div class="t" style="left:141.46px;top:432px;font-size:15.5px;line-height:22px;font-weight:700;color:#0d0d0f;letter-spacing:-0.356px;">Onboard</div>
<div class="t" style="left:142.57px;top:454px;font-size:15.5px;line-height:22px;color:#75767b;letter-spacing:-0.687px;">Add</div>
<div class="t" style="left:172.83px;top:454px;font-size:15.5px;line-height:22px;color:#75767b;letter-spacing:-1.026px;">new</div>
<div class="t" style="left:204.87px;top:454px;font-size:15.5px;line-height:22px;color:#75767b;letter-spacing:-0.386px;">employees</div>
<div class="t" style="left:281.81px;top:454px;font-size:15.5px;line-height:22px;color:#75767b;letter-spacing:-0.224px;">and</div>
<div class="t" style="left:311.87px;top:454px;font-size:15.5px;line-height:22px;color:#75767b;letter-spacing:-0.254px;">take</div>
<div class="t" style="left:345.78px;top:454px;font-size:15.5px;line-height:22px;color:#75767b;letter-spacing:-0.509px;">them</div>
<div class="t" style="left:383.74px;top:454px;font-size:15.5px;line-height:22px;color:#75767b;letter-spacing:-0.196px;">through</div>
<div class="t" style="left:440.17px;top:454px;font-size:15.5px;line-height:22px;color:#75767b;letter-spacing:-0.465px;">the</div>
<div class="t" style="left:465.74px;top:454px;font-size:15.5px;line-height:22px;color:#75767b;letter-spacing:-0.021px;">onboarding</div>
<div class="t" style="left:547.00px;top:454px;font-size:15.5px;line-height:22px;color:#75767b;letter-spacing:-0.190px;">process</div>
<div class="t" style="left:605.01px;top:454px;font-size:15.5px;line-height:22px;color:#75767b;letter-spacing:0.146px;">to</div>
<div class="t" style="left:141.94px;top:476px;font-size:15.5px;line-height:22px;color:#75767b;letter-spacing:0.141px;">complete</div>
<div class="t" style="left:210.78px;top:476px;font-size:15.5px;line-height:22px;color:#75767b;letter-spacing:-0.256px;">their</div>
<div class="t" style="left:245.27px;top:476px;font-size:15.5px;line-height:22px;color:#75767b;letter-spacing:-0.301px;">employee</div>
<div class="t" style="left:314.56px;top:476px;font-size:15.5px;line-height:22px;color:#75767b;letter-spacing:0.150px;">profile</div>
<div class="t" style="left:362.61px;top:476px;font-size:15.5px;line-height:22px;color:#75767b;letter-spacing:-0.224px;">and</div>
<div class="t" style="left:392.04px;top:476px;font-size:15.5px;line-height:22px;color:#75767b;letter-spacing:0.365px;">activate</div>
<div class="t" style="left:453.37px;top:476px;font-size:15.5px;line-height:22px;color:#75767b;letter-spacing:-0.256px;">their</div>
<div class="t" style="left:487.86px;top:476px;font-size:15.5px;line-height:22px;color:#75767b;letter-spacing:0.249px;">account.</div>
<div class="t" style="left:141.46px;top:507px;font-size:15.5px;line-height:22px;font-weight:700;color:#0d0d0f;letter-spacing:-0.423px;">Quick Add</div>
<div class="t" style="left:142.25px;top:529px;font-size:15.5px;line-height:22px;color:#75767b;letter-spacing:-1.351px;">To</div>
<div class="t" style="left:161.90px;top:529px;font-size:15.5px;line-height:22px;color:#75767b;letter-spacing:-1.131px;">be</div>
<div class="t" style="left:182.60px;top:529px;font-size:15.5px;line-height:22px;color:#75767b;letter-spacing:-0.790px;">used</div>
<div class="t" style="left:218.91px;top:529px;font-size:15.5px;line-height:22px;color:#75767b;letter-spacing:-0.781px;">for</div>
<div class="t" style="left:241.02px;top:529px;font-size:15.5px;line-height:22px;color:#75767b;letter-spacing:-0.745px;">your</div>
<div class="t" style="left:274.71px;top:529px;font-size:15.5px;line-height:22px;color:#75767b;letter-spacing:-0.410px;">early</div>
<div class="t" style="left:312.26px;top:529px;font-size:15.5px;line-height:22px;color:#75767b;letter-spacing:0.149px;">adopters.</div>
<div class="t" style="left:382.52px;top:529px;font-size:15.5px;line-height:22px;color:#75767b;letter-spacing:-0.687px;">Add</div>
<div class="t" style="left:413.36px;top:529px;font-size:15.5px;line-height:22px;color:#75767b;">a</div>
<div class="t" style="left:425.60px;top:529px;font-size:15.5px;line-height:22px;color:#75767b;letter-spacing:-1.166px;">user</div>
<div class="t" style="left:458.44px;top:529px;font-size:15.5px;line-height:22px;color:#75767b;letter-spacing:-0.057px;">to</div>
<div class="t" style="left:476.31px;top:529px;font-size:15.5px;line-height:22px;color:#75767b;letter-spacing:-0.566px;">the</div>
<div class="t" style="left:501.32px;top:529px;font-size:15.5px;line-height:22px;color:#75767b;letter-spacing:0.295px;">platform</div>
<div class="t" style="left:564.41px;top:529px;font-size:15.5px;line-height:22px;color:#75767b;letter-spacing:-0.057px;">to</div>
<div class="t" style="left:581.44px;top:529px;font-size:15.5px;line-height:22px;color:#75767b;letter-spacing:-0.460px;">help</div>
<div class="t" style="left:142.62px;top:551px;font-size:15.5px;line-height:22px;color:#75767b;letter-spacing:0.141px;">with</div>
<div class="t" style="left:175.25px;top:551px;font-size:15.5px;line-height:22px;color:#75767b;letter-spacing:-0.465px;">the</div>
<div class="t" style="left:200.84px;top:551px;font-size:15.5px;line-height:22px;color:#75767b;letter-spacing:-0.197px;">setup.</div>
<div class="t" style="left:246.60px;top:551px;font-size:15.5px;line-height:22px;color:#75767b;letter-spacing:-1.066px;">This</div>
<div class="t" style="left:277.00px;top:551px;font-size:15.5px;line-height:22px;color:#75767b;letter-spacing:-1.099px;">user</div>
<div class="t" style="left:309.90px;top:551px;font-size:15.5px;line-height:22px;color:#75767b;letter-spacing:-0.134px;">will</div>
<div class="t" style="left:334.83px;top:551px;font-size:15.5px;line-height:22px;color:#75767b;letter-spacing:-0.152px;">not</div>
<div class="t" style="left:361.25px;top:551px;font-size:15.5px;line-height:22px;color:#75767b;letter-spacing:-1.131px;">be</div>
<div class="t" style="left:382.72px;top:551px;font-size:15.5px;line-height:22px;color:#75767b;letter-spacing:-0.335px;">taken</div>
<div class="t" style="left:424.34px;top:551px;font-size:15.5px;line-height:22px;color:#75767b;letter-spacing:-0.196px;">through</div>
<div class="t" style="left:480.77px;top:551px;font-size:15.5px;line-height:22px;color:#75767b;letter-spacing:-0.465px;">the</div>
<div class="t" style="left:506.34px;top:551px;font-size:15.5px;line-height:22px;color:#75767b;letter-spacing:0.001px;">onboarding</div>
<div class="t" style="left:141.60px;top:573px;font-size:15.5px;line-height:22px;color:#75767b;letter-spacing:-0.164px;">process.</div>
<div class="t" style="left:141.76px;top:604px;font-size:15.5px;line-height:22px;font-weight:700;color:#0d0d0f;letter-spacing:-0.512px;">Global Teams</div>
<svg class="b" style="left:0px;top:0px;" width="2463" height="1328" viewBox="0 0 2463 1328"><rect x="241.2" y="613.45" width="6.10" height="1.7" fill="#0d0d0f"/></svg>
<div class="t" style="left:252.76px;top:604px;font-size:15.5px;line-height:22px;font-weight:700;color:#0d0d0f;letter-spacing:-0.554px;">Employer of Record</div>
<div class="t" style="left:141.33px;top:626px;font-size:15.5px;line-height:22px;color:#75767b;letter-spacing:-0.614px;">Employ</div>
<div class="t" style="left:195.53px;top:626px;font-size:15.5px;line-height:22px;color:#75767b;letter-spacing:-0.324px;">anyone,</div>
<div class="t" style="left:252.98px;top:626px;font-size:15.5px;line-height:22px;color:#75767b;letter-spacing:-0.359px;">anywhere</div>
<div class="t" style="left:322.64px;top:626px;font-size:15.5px;line-height:22px;color:#75767b;letter-spacing:-1.693px;">in</div>
<div class="t" style="left:338.06px;top:626px;font-size:15.5px;line-height:22px;color:#75767b;letter-spacing:-0.465px;">the</div>
<div class="t" style="left:364.30px;top:626px;font-size:15.5px;line-height:22px;color:#75767b;letter-spacing:0.071px;">world</div>
<div class="t" style="left:406.93px;top:626px;font-size:15.5px;line-height:22px;color:#75767b;letter-spacing:0.086px;">without</div>
<div class="t" style="left:462.76px;top:626px;font-size:15.5px;line-height:22px;color:#75767b;letter-spacing:-0.135px;">worrying</div>
<div class="t" style="left:525.42px;top:626px;font-size:15.5px;line-height:22px;color:#75767b;letter-spacing:0.090px;">about</div>
<div class="t" style="left:141.94px;top:648px;font-size:15.5px;line-height:22px;color:#75767b;letter-spacing:0.079px;">compliance</div>
<div class="t" style="left:225.98px;top:648px;font-size:15.5px;line-height:22px;color:#75767b;letter-spacing:-0.427px;">and</div>
<div class="t" style="left:255.84px;top:648px;font-size:15.5px;line-height:22px;color:#75767b;letter-spacing:-0.491px;">tax</div>
<div class="t" style="left:280.62px;top:648px;font-size:15.5px;line-height:22px;color:#75767b;letter-spacing:-0.495px;">issues,</div>
<div class="t" style="left:329.37px;top:648px;font-size:15.5px;line-height:22px;color:#75767b;letter-spacing:-0.741px;">using</div>
<div class="t" style="left:368.10px;top:648px;font-size:15.5px;line-height:22px;color:#75767b;letter-spacing:-1.199px;">our</div>
<div class="t" style="left:393.05px;top:648px;font-size:15.5px;line-height:22px;color:#75767b;letter-spacing:-0.403px;">Employer</div>
<div class="t" style="left:461.48px;top:648px;font-size:15.5px;line-height:22px;color:#75767b;letter-spacing:-1.126px;">of</div>
<div class="t" style="left:478.32px;top:648px;font-size:15.5px;line-height:22px;color:#75767b;letter-spacing:-0.360px;">Record</div>
<div class="t" style="left:531.33px;top:648px;font-size:15.5px;line-height:22px;color:#75767b;letter-spacing:-0.142px;">service.</div>
<div class="t" style="left:141.95px;top:679px;font-size:15.5px;line-height:22px;font-weight:700;color:#0d0d0f;letter-spacing:-0.201px;">SmartMatch</div>
<svg class="b" style="left:0px;top:0px;" width="2463" height="1328" viewBox="0 0 2463 1328"><rect x="233" y="688.65" width="6.10" height="1.7" fill="#0d0d0f"/></svg>
<div class="t" style="left:244.46px;top:679px;font-size:15.5px;line-height:22px;font-weight:700;color:#0d0d0f;letter-spacing:-0.534px;">Find your next employee</div>
<div class="t" style="left:141.90px;top:701px;font-size:15.5px;line-height:22px;color:#75767b;letter-spacing:0.065px;">SmartMatch</div>
<div class="t" style="left:230.65px;top:701px;font-size:15.5px;line-height:22px;color:#75767b;letter-spacing:-0.074px;">connects</div>
<div class="t" style="left:297.26px;top:701px;font-size:15.5px;line-height:22px;color:#75767b;letter-spacing:0.053px;">standout</div>
<div class="t" style="left:362.61px;top:701px;font-size:15.5px;line-height:22px;color:#75767b;letter-spacing:0.061px;">candidates</div>
<div class="t" style="left:443.62px;top:701px;font-size:15.5px;line-height:22px;color:#75767b;letter-spacing:-0.057px;">to</div>
<div class="t" style="left:462.09px;top:701px;font-size:15.5px;line-height:22px;color:#75767b;letter-spacing:-0.880px;">your</div>
<div class="t" style="left:494.62px;top:701px;font-size:15.5px;line-height:22px;color:#75767b;letter-spacing:-0.548px;">business.</div>
<div class="t" style="left:560.24px;top:701px;font-size:15.5px;line-height:22px;color:#75767b;letter-spacing:-1.219px;">You</div>
<div class="t" style="left:588.56px;top:701px;font-size:15.5px;line-height:22px;color:#75767b;letter-spacing:-0.646px;">get</div>
<div class="t" style="left:141.95px;top:723px;font-size:15.5px;line-height:22px;color:#75767b;letter-spacing:-0.216px;">great</div>
<div class="t" style="left:182.36px;top:723px;font-size:15.5px;line-height:22px;color:#75767b;letter-spacing:-0.041px;">talent</div>
<div class="t" style="left:226.42px;top:723px;font-size:15.5px;line-height:22px;color:#75767b;letter-spacing:-0.984px;">for</div>
<div class="t" style="left:247.91px;top:723px;font-size:15.5px;line-height:22px;color:#75767b;letter-spacing:-0.571px;">every</div>
<div class="t" style="left:289.15px;top:723px;font-size:15.5px;line-height:22px;color:#75767b;letter-spacing:-0.530px;">role</div>
<div class="t" style="left:319.03px;top:723px;font-size:15.5px;line-height:22px;color:#75767b;letter-spacing:0.086px;">without</div>
<div class="t" style="left:373.96px;top:723px;font-size:15.5px;line-height:22px;color:#75767b;letter-spacing:-0.234px;">having</div>
<div class="t" style="left:423.53px;top:723px;font-size:15.5px;line-height:22px;color:#75767b;letter-spacing:-0.057px;">to</div>
<div class="t" style="left:441.37px;top:723px;font-size:15.5px;line-height:22px;color:#75767b;letter-spacing:-1.012px;">ever</div>
<div class="t" style="left:473.51px;top:723px;font-size:15.5px;line-height:22px;color:#75767b;letter-spacing:0.012px;">post</div>
<div class="t" style="left:508.36px;top:723px;font-size:15.5px;line-height:22px;color:#75767b;">a</div>
<div class="t" style="left:521.99px;top:723px;font-size:15.5px;line-height:22px;color:#75767b;letter-spacing:-0.962px;">job</div>
<div class="t" style="left:545.72px;top:723px;font-size:15.5px;line-height:22px;color:#75767b;letter-spacing:-0.397px;">ad.</div>
<svg class="b" style="left:0px;top:0px;pointer-events:none;" width="2463" height="1328" viewBox="0 0 2463 1328"><rect x="124.8" y="429" width="533.2" height="70.9" fill="none" stroke="#ee2c1e" stroke-width="5"/></svg>
<div class="b" style="left:2448px;top:5px;width:11px;height:1318px;background:#fafafa;border-left:1px solid #e8e8e8;"></div>
<div class="b" style="left:2452px;top:5px;width:7px;height:988px;background:#c1c1c1;border-radius:3px 0 0 4px;border-right:1px solid #d2d2d2;"></div>
<div class="b" style="left:2427px;top:321px;width:32px;height:36px;background:#d3d6dc;border-radius:5px 0 0 5px;box-shadow:-2px 1px 6px rgba(0,0,0,.12);"></div>
<svg class="b" style="left:2435px;top:332px;" width="20" height="15" viewBox="0 0 20 15"><path d="M0.2 0.6 H6 L10.2 14.2 H4.6 Z M7.8 0.6 H13.6 L17.4 14.2 H12 Z M15 0.6 H19.9 L18.2 8.6 Z" fill="#000"/></svg>
<div class="b" style="left:2383px;top:1248px;width:64px;height:64px;background:#7b1fd1;border-radius:50%;"></div>
<svg class="b" style="left:2383px;top:1248px;" width="64" height="64" viewBox="0 0 64 64"><rect x="15.2" y="21.6" width="33.8" height="17" rx="8.5" fill="#fff"/><path d="M35.6 41.6 H42 V48.6 Z" fill="#fff"/></svg>
<div class="b" style="left:0px;top:0px;width:2463px;height:4px;background:#000;"></div>
<div class="b" style="left:0px;top:0px;width:3px;height:1328px;background:#000;"></div>
<div class="b" style="left:2459px;top:0px;width:4px;height:1328px;background:#000;"></div>
<div class="b" style="left:0px;top:1324px;width:2463px;height:4px;background:#000;"></div>
</div></body></html>
